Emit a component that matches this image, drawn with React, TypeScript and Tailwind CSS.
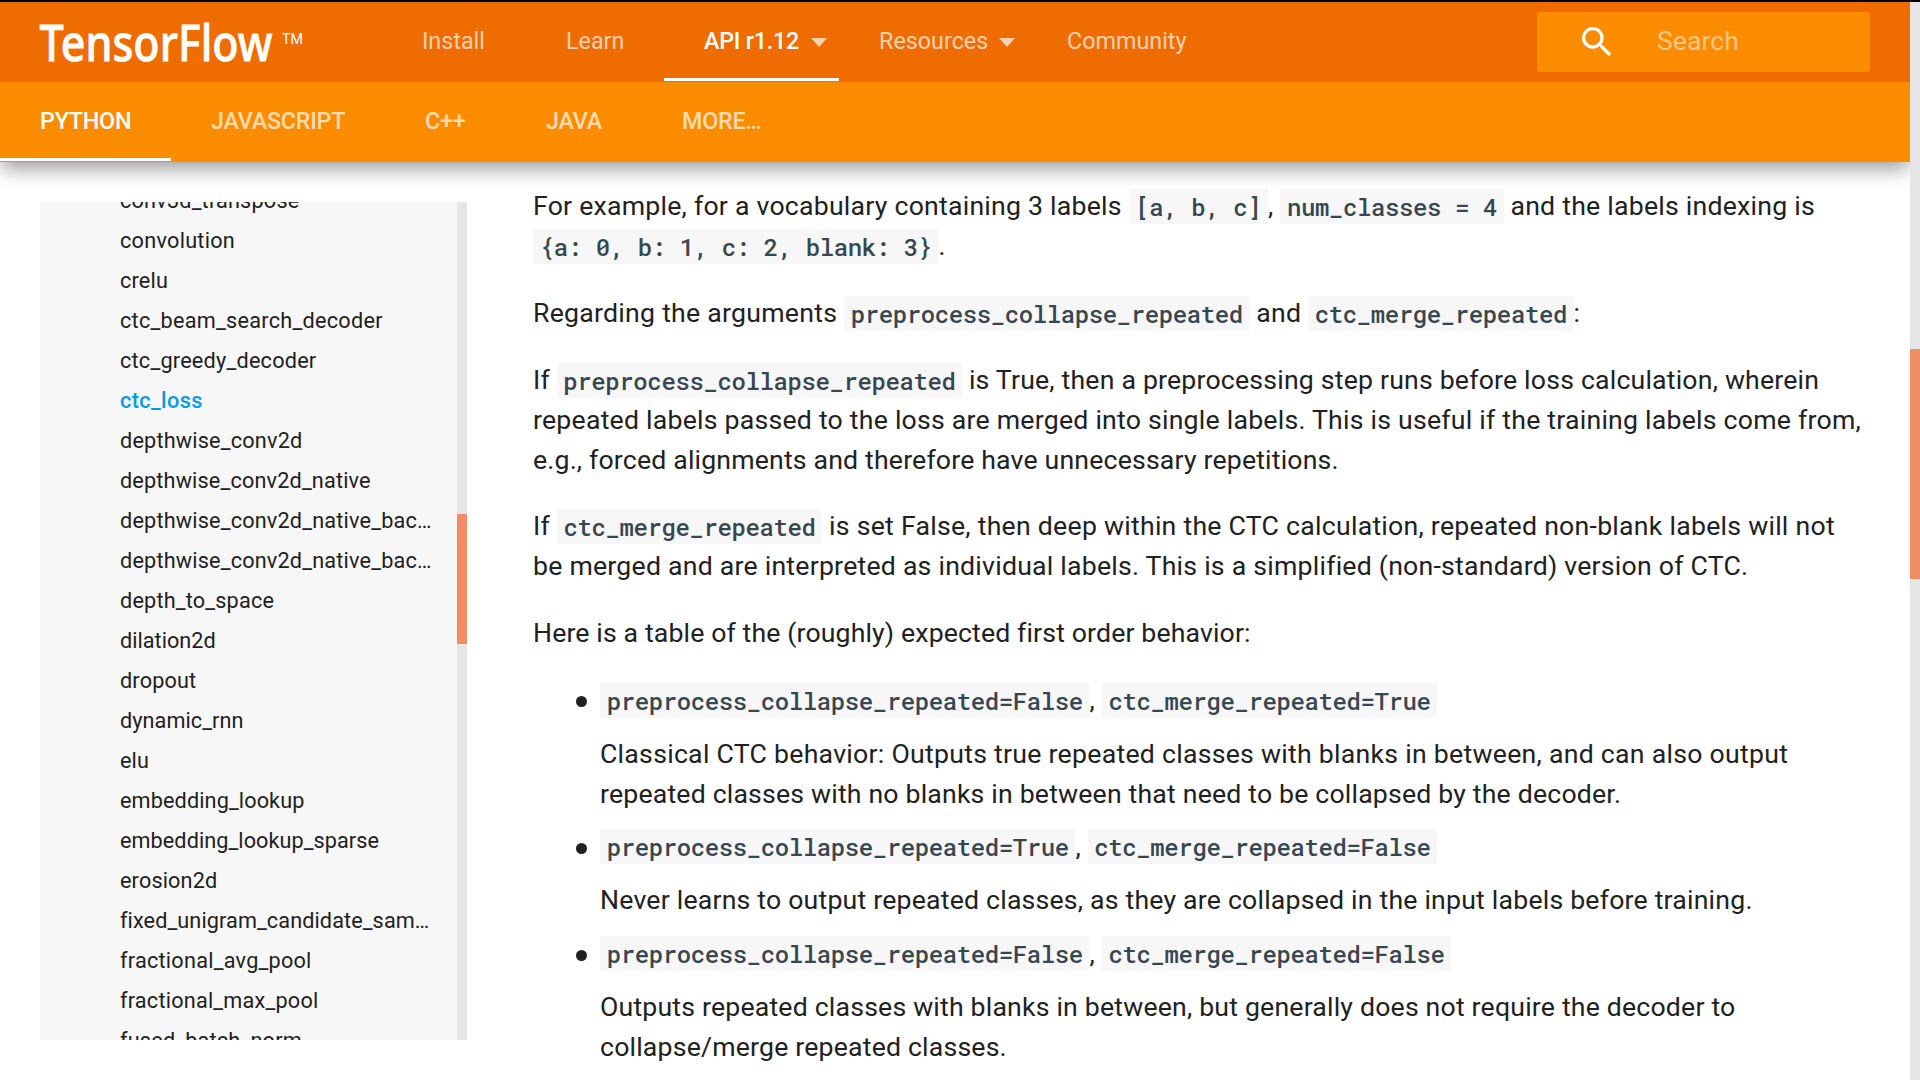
import type { ReactNode } from "react";

const sidebarItems: { name: string; tracking: string; active?: boolean }[] = [
  { name: "conv3d_transpose", tracking: "tracking-[0.19px]" },
  { name: "convolution", tracking: "tracking-[0.26px]" },
  { name: "crelu", tracking: "tracking-[0.2px]" },
  { name: "ctc_beam_search_decoder", tracking: "tracking-[0.26px]" },
  { name: "ctc_greedy_decoder", tracking: "tracking-[0.22px]" },
  { name: "ctc_loss", tracking: "tracking-[0.4px]", active: true },
  { name: "depthwise_conv2d", tracking: "tracking-[0.19px]" },
  { name: "depthwise_conv2d_native", tracking: "tracking-[0.16px]" },
  { name: "depthwise_conv2d_native_bac…", tracking: "tracking-[0.18px]" },
  { name: "depthwise_conv2d_native_bac…", tracking: "tracking-[0.18px]" },
  { name: "depth_to_space", tracking: "tracking-[0.18px]" },
  { name: "dilation2d", tracking: "tracking-[0.02px]" },
  { name: "dropout", tracking: "tracking-[0.15px]" },
  { name: "dynamic_rnn", tracking: "tracking-[0.06px]" },
  { name: "elu", tracking: "tracking-[0.1px]" },
  { name: "embedding_lookup", tracking: "tracking-[0.11px]" },
  { name: "embedding_lookup_sparse", tracking: "tracking-[0.06px]" },
  { name: "erosion2d", tracking: "tracking-[0.14px]" },
  { name: "fixed_unigram_candidate_sam…", tracking: "tracking-[0.09px]" },
  { name: "fractional_avg_pool", tracking: "tracking-[0.24px]" },
  { name: "fractional_max_pool", tracking: "tracking-[0.21px]" },
  { name: "fused_batch_norm", tracking: "tracking-[0.19px]" },
];

const languages = [
  { label: "PYTHON", width: "w-[171px]", active: true },
  { label: "JAVASCRIPT", width: "w-[214px]", active: false },
  { label: "C++", width: "w-[121px]", active: false },
  { label: "JAVA", width: "w-[136px]", active: false },
  { label: "MORE…", width: "w-[160px]", active: false },
];

const sections = [
  { label: "Install", width: "w-[144px]", active: false, menu: false },
  { label: "Learn", width: "w-[138px]", active: false, menu: false },
  { label: "API r1.12", width: "w-[175px]", active: true, menu: true },
  { label: "Resources", width: "w-[188px]", active: false, menu: true },
  { label: "Community", width: "w-[200px]", active: false, menu: false },
];

function Logo() {
  return (
    <svg className="h-[80px] w-[382px] shrink-0" viewBox="0 0 382 80" fill="#fff">
      <text
        x="39.5"
        y="59"
        fontFamily="'Noto Sans', sans-serif"
        fontWeight="500"
        fontSize="51.5"
        textLength="233"
        lengthAdjust="spacingAndGlyphs"
        stroke="#fff"
        strokeWidth="0.8"
      >
        TensorFlow
      </text>
      <text x="282" y="42" fontFamily="Roboto, sans-serif" fontSize="15" textLength="21" lengthAdjust="spacingAndGlyphs">
        TM
      </text>
    </svg>
  );
}

function SearchIcon() {
  return (
    <svg className="ml-10 size-10 shrink-0" viewBox="0 0 24 24" fill="#fff">
      <path d="M15.5 14h-.79l-.28-.27A6.471 6.471 0 0 0 16 9.5 6.5 6.5 0 1 0 9.5 16c1.61 0 3.09-.59 4.23-1.57l.27.28v.79l5 4.99L20.49 19l-4.99-5zm-6 0C7.01 14 5 11.99 5 9.5S7.01 5 9.5 5 14 7.01 14 9.5 11.99 14 9.5 14z" />
    </svg>
  );
}

function Header() {
  return (
    <header className="z-10 shrink-0 text-[23.33px] shadow-[0_8px_18px_-1px_rgba(0,0,0,0.38)]">
      <div className="flex h-20 bg-[#ef6c00]">
        <Logo />
        <nav className="flex">
          {sections.map((s) => (
            <div
              key={s.label}
              className={`relative flex items-center whitespace-nowrap pb-[2px] pl-10 ${s.width} ${
                s.active ? "font-medium tracking-[-0.25px] text-white" : "text-white/70"
              }`}
            >
              {s.label}
              {s.menu && (
                <svg className="mr-3 ml-auto h-[9px] w-4 translate-y-px fill-white/70" viewBox="0 0 16 9">
                  <path d="M0 0h16l-8 9z" />
                </svg>
              )}
              {s.active && <span className="absolute inset-x-0 bottom-px h-[3px] bg-white" />}
            </div>
          ))}
        </nav>
        <div className="mt-[10px] mr-10 ml-auto flex h-[60px] w-[333px] items-center rounded-[3px] bg-[#fb8c00]">
          <SearchIcon />
          <span className="ml-10 pb-[2px] text-[26.67px] text-white/50">Search</span>
        </div>
      </div>
      <nav className="flex h-20 bg-[#fb8c00] font-medium">
        {languages.map((l) => (
          <div
            key={l.label}
            className={`relative flex items-center whitespace-nowrap pb-[2px] pl-10 tracking-[-0.25px] ${l.width} ${
              l.active ? "text-white" : "text-white/70"
            }`}
          >
            {l.label}
            {l.active && <span className="absolute inset-x-0 bottom-px h-[3px] bg-white" />}
          </div>
        ))}
      </nav>
    </header>
  );
}

function Sidebar() {
  return (
    <aside className="mt-10 ml-10 flex h-[838px] w-[427px] shrink-0 overflow-hidden bg-[#f7f7f7]">
      <ul className="-mt-[21px] flex-1 pl-20 text-[21.67px]">
        {sidebarItems.map((item, i) => (
          <li
            key={i}
            className={`h-10 whitespace-nowrap leading-10 ${item.tracking} ${
              item.active ? "font-medium text-[#039be5]" : "text-[#212121]"
            }`}
          >
            {item.name}
          </li>
        ))}
      </ul>
      <div className="w-[10px] bg-[#e6e6e6] pt-[312px]">
        <div className="h-[130px] rounded-[1px] bg-[#f08c66]" />
      </div>
    </aside>
  );
}

function Code({ children }: { children: ReactNode }) {
  return (
    <code className="bg-[#f7f7f7] px-[6.67px] py-[1.5px] font-['Roboto_Mono','Liberation_Mono',monospace] text-[24px] leading-none font-medium tracking-[-0.4px] text-[#37474f]">
      {children}
    </code>
  );
}

function Behavior({ codes, children }: { codes: [string, string]; children: ReactNode }) {
  return (
    <li className="flex">
      <span className="mt-4 mr-[13px] size-[11px] shrink-0 rounded-full bg-[#212121]" />
      <div className="flex flex-col gap-[13.33px]">
        <p>
          <Code>{codes[0]}</Code>, <Code>{codes[1]}</Code>
        </p>
        <p>{children}</p>
      </div>
    </li>
  );
}

function Article() {
  return (
    <article className="mt-6 ml-[66px] whitespace-nowrap text-[26.67px] leading-10 tracking-[0.225px] text-[#212121]">
      <p>
        For example, for a vocabulary containing 3 labels <Code>[a, b, c]</Code>, <Code>num_classes = 4</Code> and the
        labels indexing is
        <br />
        <Code>{"{a: 0, b: 1, c: 2, blank: 3}"}</Code>.
      </p>
      <p className="mt-[27px] tracking-[0.25px]">
        Regarding the arguments <Code>preprocess_collapse_repeated</Code> and <Code>ctc_merge_repeated</Code>:
      </p>
      <p className="mt-[27px]">
        <span className="tracking-[0.19px]">
          If <Code>preprocess_collapse_repeated</Code> is True, then a preprocessing step runs before loss calculation,
          wherein
        </span>
        <br />
        repeated labels passed to the loss are merged into single labels. This is useful if the training labels come
        from,
        <br />
        <span className="tracking-[0.17px]">e.g., forced alignments and therefore have unnecessary repetitions.</span>
      </p>
      <p className="mt-[26px]">
        <span className="tracking-[0.25px]">
          If <Code>ctc_merge_repeated</Code> is set False, then deep within the CTC calculation, repeated non-blank
          labels will not
        </span>
        <br />
        be merged and are interpreted as individual labels. This is a simplified (non-standard) version of CTC.
      </p>
      <p className="mt-[27px] tracking-[0.13px]">Here is a table of the (roughly) expected first order behavior:</p>
      <ul className="mt-[27.3px] ml-[43px] flex flex-col gap-[13.33px]">
        <Behavior codes={["preprocess_collapse_repeated=False", "ctc_merge_repeated=True"]}>
          <span className="tracking-[0.263px]">
            Classical CTC behavior: Outputs true repeated classes with blanks in between, and can also output
          </span>
          <br />
          <span className="tracking-[0.18px]">
            repeated classes with no blanks in between that need to be collapsed by the decoder.
          </span>
        </Behavior>
        <Behavior codes={["preprocess_collapse_repeated=True", "ctc_merge_repeated=False"]}>
          <span className="tracking-[0.2px]">
            Never learns to output repeated classes, as they are collapsed in the input labels before training.
          </span>
        </Behavior>
        <Behavior codes={["preprocess_collapse_repeated=False", "ctc_merge_repeated=False"]}>
          <span className="tracking-[0.186px]">
            Outputs repeated classes with blanks in between, but generally does not require the decoder to
            <br />
            collapse/merge repeated classes.
          </span>
        </Behavior>
      </ul>
    </article>
  );
}

export default function App() {
  return (
    <div className="flex h-[1080px] w-[1920px] flex-col overflow-hidden bg-white font-[Roboto,sans-serif]">
      <div className="h-[2px] shrink-0 bg-black" />
      <div className="flex min-h-0 flex-1">
        <div className="flex min-w-0 flex-1 flex-col overflow-hidden">
          <Header />
          <main className="flex min-h-0 flex-1">
            <Sidebar />
            <Article />
          </main>
        </div>
        <div className="w-[10px] shrink-0 bg-[#e6e6e6] pt-[347px]">
          <div className="h-[230px] rounded-[1px] bg-[#f08c66]" />
        </div>
      </div>
    </div>
  );
}
